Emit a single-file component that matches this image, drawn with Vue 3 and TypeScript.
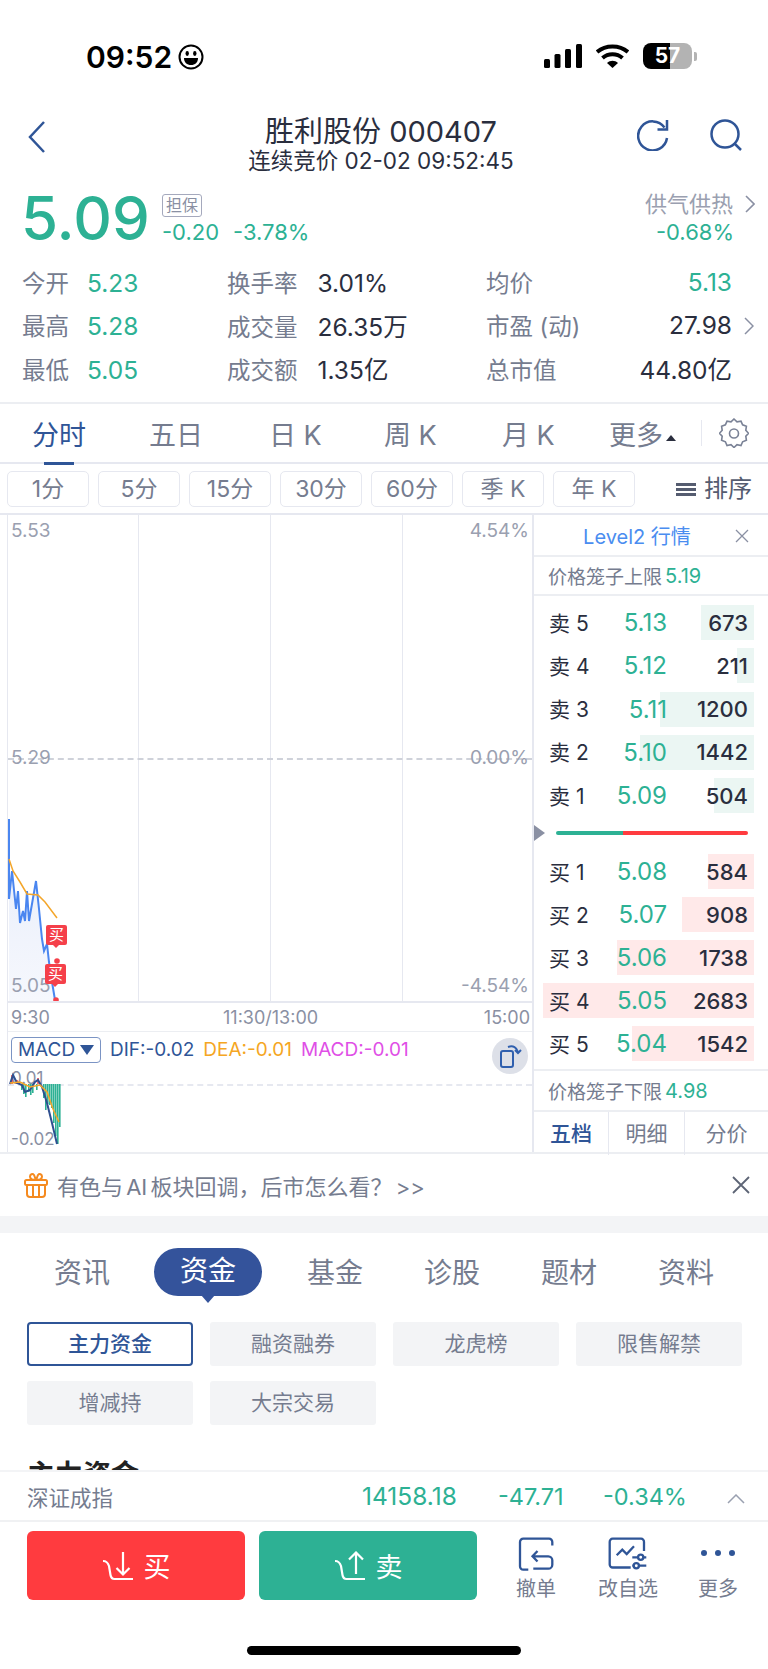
<script setup lang="ts">
const stats = [
  { a: "今开", b: "5.23", c: "换手率", d: "3.01%", e: "均价", f: "5.13", green: true, more: false },
  { a: "最高", b: "5.28", c: "成交量", d: "26.35万", e: "市盈 (动)", f: "27.98", green: false, more: true },
  { a: "最低", b: "5.05", c: "成交额", d: "1.35亿", e: "总市值", f: "44.80亿", green: false, more: false },
];
const tabs = ["分时", "五日", "日 K", "周 K", "月 K"];
const periods = ["1分", "5分", "15分", "30分", "60分", "季 K", "年 K"];
const asks = [
  { name: "卖 5", price: "5.13", vol: "673", w: 53 },
  { name: "卖 4", price: "5.12", vol: "211", w: 17 },
  { name: "卖 3", price: "5.11", vol: "1200", w: 94 },
  { name: "卖 2", price: "5.10", vol: "1442", w: 114 },
  { name: "卖 1", price: "5.09", vol: "504", w: 40 },
];
const bids = [
  { name: "买 1", price: "5.08", vol: "584", w: 46 },
  { name: "买 2", price: "5.07", vol: "908", w: 72 },
  { name: "买 3", price: "5.06", vol: "1738", w: 137 },
  { name: "买 4", price: "5.05", vol: "2683", w: 211 },
  { name: "买 5", price: "5.04", vol: "1542", w: 122 },
];
const newsTabs = ["资讯", "资金", "基金", "诊股", "题材", "资料"];
const chips = ["主力资金", "融资融券", "龙虎榜", "限售解禁", "增减持", "大宗交易"];

const priceLine = "1,306 1,386 4,358 8,396 10,378 12,410 15,398 17,408 19,378 21,408 28,368 31,396 34,426 36,438 39,431 41,449 44,469 47,487";
const avgLine = "1,346 5,358 12,369 19,381 30,382 37,389 49,405";
const macdBars = [
  { x: 13, h: 6 }, { x: 15, h: 10 }, { x: 17, h: 13 }, { x: 20, h: 8 }, { x: 22, h: 11 }, { x: 24, h: 9 }, { x: 28, h: 6 },
  { x: 35, h: 14 }, { x: 37, h: 26 }, { x: 39, h: 20 }, { x: 41, h: 21 }, { x: 43, h: 24 },
  { x: 45, h: 39 }, { x: 47, h: 52 }, { x: 49, h: 60 }, { x: 51, h: 43 },
];
const difLine = "2,30 5,21 9,29 14,31 17,38 22,36 27,28 30,26 34,33 39,49 44,69 49,90";
const deaLine = "2,29 12,28 22,33 32,31 39,38 45,55 51,68";
</script>

<template>
  <div class="page">
    <div class="status">
      <div class="clock">
        <span>09:52</span>
        <svg width="26" height="26" viewBox="0 0 26 26">
          <circle cx="13" cy="13" r="11.500" fill="none" stroke="#000" stroke-width="2" />
          <ellipse cx="9.200" cy="9.500" rx="1.700" ry="2.400" />
          <ellipse cx="16.800" cy="9.500" rx="1.700" ry="2.400" />
          <path d="M6 14h14c0 4.400-3 7-7 7s-7-2.600-7-7z" />
        </svg>
      </div>
      <div class="sys">
        <svg width="38" height="24" viewBox="0 0 38 24">
          <rect x="0" y="15" width="6" height="9" rx="1.500" />
          <rect x="10.500" y="10" width="6" height="14" rx="1.500" />
          <rect x="21" y="5" width="6" height="19" rx="1.500" />
          <rect x="32" y="0" width="6" height="24" rx="1.500" />
        </svg>
        <svg width="33" height="24" viewBox="0 0 33 24">
          <path d="M1 8C9.500 .5 23.500 .5 32 8" fill="none" stroke="#000" stroke-width="4" />
          <path d="M6.500 14c5.700-5 14.300-5 20 0" fill="none" stroke="#000" stroke-width="4" />
          <path d="M11 19c3.200-3 7.800-3 11 0l-5.500 5z" />
        </svg>
        <div class="battery">
          <div class="cell"><span>57</span></div>
          <i></i>
        </div>
      </div>
    </div>

    <div class="nav">
      <svg class="back" width="20" height="34" viewBox="0 0 20 34">
        <path d="M17 2 3 17l14 15" fill="none" stroke="#2f5597" stroke-width="2.500" />
      </svg>
      <div class="title">
        <div class="name">胜利股份 000407</div>
        <div class="sub">连续竞价 02-02 09:52:45</div>
      </div>
      <svg class="nav-ic" style="left: 637px" width="32" height="32" viewBox="0 0 32 32">
        <path d="M27.500 8.500A14.500 14.500 0 1 0 30 19" fill="none" stroke="#2f5597" stroke-width="2.500" />
        <path d="M30 1v9.500H20.500" fill="none" stroke="#2f5597" stroke-width="2.500" />
      </svg>
      <svg class="nav-ic" style="left: 710px" width="32" height="32" viewBox="0 0 32 32">
        <circle cx="15" cy="15" r="13.500" fill="none" stroke="#2f5597" stroke-width="2.500" />
        <path d="m24 24 7 7" fill="none" stroke="#2f5597" stroke-width="2.500" />
      </svg>
    </div>

    <div class="quote">
      <div class="price">5.09</div>
      <div class="change">
        <span class="tag">担保</span>
        <div class="green"><span>-0.20</span><span>-3.78%</span></div>
      </div>
      <div class="sector">
        <div class="sector-name">供气供热
          <svg width="10" height="18" viewBox="0 0 10 18"><path d="m1 1 8 8-8 8" fill="none" stroke="#8a90a3" stroke-width="1.600" /></svg>
        </div>
        <div class="green sector-pct">-0.68%</div>
      </div>
    </div>

    <div class="stats">
      <div v-for="row in stats" :key="row.a" class="stat-row">
        <div class="col1"><span class="lbl">{{ row.a }}</span><span class="green val">{{ row.b }}</span></div>
        <div class="col2"><span class="lbl">{{ row.c }}</span><span class="val">{{ row.d }}</span></div>
        <div class="col3">
          <span class="lbl">{{ row.e }}</span><span class="val" :class="{ green: row.green }">{{ row.f }}</span>
          <svg v-if="row.more" class="more" width="10" height="20" viewBox="0 0 10 20"><path d="m1 2 8 8-8 8" fill="none" stroke="#8a90a3" stroke-width="1.500" /></svg>
        </div>
      </div>
    </div>

    <div class="tabs">
      <div v-for="(t, i) in tabs" :key="t" class="tab" :class="{ on: i === 0 }">{{ t }}</div>
      <div class="tab more-tab">更多<i></i></div>
      <div class="gear">
        <svg width="30" height="30" viewBox="0 0 30 30" fill="none" stroke="#7a8296" stroke-width="1.600">
          <path d="M15 2l3 2.800 4-.7 1.600 3.700 3.800 1.500-.6 4 2.700 3-2.700 2.900.6 4-3.800 1.600L22 28.500l-4-.8-3 2.800-3-2.800-4 .8-1.600-3.700-3.800-1.600.6-4L.5 16.300l2.700-3-.6-4 3.800-1.500L8 4.100l4 .7z" transform="translate(0 -1)" />
          <circle cx="15" cy="15.500" r="4.500" />
        </svg>
      </div>
    </div>

    <div class="periods">
      <div v-for="p in periods" :key="p" class="period">{{ p }}</div>
      <div class="sort"><i></i>排序</div>
    </div>

    <div class="market">
      <div class="chart">
        <div class="plot">
          <i class="vline" style="left: 130px"></i>
          <i class="vline" style="left: 262px"></i>
          <i class="vline" style="left: 394px"></i>
          <i class="mid"></i>
          <svg class="lines" width="525" height="488" viewBox="0 0 525 488">
            <defs>
              <linearGradient id="area" x1="0" x2="0" y1="0" y2="1">
                <stop offset="0" stop-color="#e6ecfa" />
                <stop offset="1" stop-color="#f6f8fd" />
              </linearGradient>
            </defs>
            <polygon :points="`${priceLine} 47,488 1,488`" fill="url(#area)" />
            <polyline :points="priceLine" fill="none" stroke="#4a86f0" stroke-width="2" />
            <polyline :points="avgLine" fill="none" stroke="#f4a62a" stroke-width="1.500" />
            <circle cx="49" cy="448" r="2.800" fill="#f5404a" />
            <circle cx="48" cy="487" r="2.800" fill="#f5404a" />
          </svg>
          <span class="axis tl">5.53</span>
          <span class="axis tr">4.54%</span>
          <span class="axis ml">5.29</span>
          <span class="axis mr">0.00%</span>
          <span class="axis bl">5.05</span>
          <span class="axis br">-4.54%</span>
          <div class="mark" style="left: 38px; top: 410px">买</div>
          <div class="mark" style="left: 37px; top: 449px">买</div>
        </div>
        <div class="times"><span>9:30</span><span class="t-mid">11:30/13:00</span><span>15:00</span></div>
        <div class="legend">
          <span class="macd-btn">MACD<i></i></span>
          <span class="dif">DIF:-0.02</span>
          <span class="dea">DEA:-0.01</span>
          <span class="mac">MACD:-0.01</span>
          <div class="rotate">
            <svg width="26" height="26" viewBox="0 0 26 26" fill="none" stroke="#2f5fae" stroke-width="2">
              <rect x="4" y="8" width="12" height="16" rx="2" />
              <path d="M11 4c5-2 9 .5 10 5" />
              <path d="m18 7 3 3 3-3" />
            </svg>
          </div>
        </div>
        <div class="macd">
          <i class="zero"></i>
          <span class="m-top">0.01</span>
          <span class="m-bot">-0.02</span>
          <svg class="lines" width="525" height="96" viewBox="0 0 525 96">
            <rect v-for="b in macdBars" :key="b.x" :x="b.x" y="30" width="1.600" :height="b.h" fill="#2db194" />
            <path d="M4 30v-9M9 30v-4M30 30v-6" stroke="#f5404a" stroke-width="1.500" />
            <polyline :points="difLine" fill="none" stroke="#2f4f8f" stroke-width="2" />
            <polyline :points="deaLine" fill="none" stroke="#f4a62a" stroke-width="1.500" />
          </svg>
        </div>
      </div>

      <div class="book">
        <div class="book-head"><span>Level2 行情</span>
          <svg width="14" height="14" viewBox="0 0 14 14"><path d="m1 1 12 12M13 1 1 13" stroke="#8a90a3" stroke-width="1.300" /></svg>
        </div>
        <div class="cage">价格笼子上限<b>5.19</b></div>
        <div class="levels">
          <div v-for="r in asks" :key="r.name" class="level">
            <i class="bar ask" :style="{ width: r.w + 'px' }"></i>
            <span class="l-name">{{ r.name }}</span><span class="l-price">{{ r.price }}</span><span class="l-vol">{{ r.vol }}</span>
          </div>
        </div>
        <div class="slider">
          <i class="arrow"></i>
          <div class="track"><i class="t-green"></i><i class="t-red"></i></div>
        </div>
        <div class="levels bids">
          <div v-for="r in bids" :key="r.name" class="level">
            <i class="bar bid" :style="{ width: r.w + 'px' }"></i>
            <span class="l-name">{{ r.name }}</span><span class="l-price">{{ r.price }}</span><span class="l-vol">{{ r.vol }}</span>
          </div>
        </div>
        <div class="cage low">价格笼子下限<b>4.98</b></div>
        <div class="book-tabs"><span class="on">五档</span><span>明细</span><span>分价</span></div>
      </div>
    </div>

    <div class="notice">
      <svg width="26" height="26" viewBox="0 0 26 26" fill="none" stroke="#f58a1f" stroke-width="2">
        <rect x="2" y="8" width="22" height="5" rx="1.500" />
        <path d="M4 13v9a3 3 0 0 0 3 3h12a3 3 0 0 0 3-3v-9M10 13v12M16 13v12" />
        <path d="M13 8C9 8 7 6.500 7 4.500S9.500 1 11 3zM13 8c4 0 6-1.500 6-3.500S16.500 1 15 3z" />
      </svg>
      <span class="notice-text">有色与 AI 板块回调，后市怎么看？ &gt;&gt;</span>
      <svg class="notice-x" width="18" height="18" viewBox="0 0 18 18"><path d="m1 1 16 16M17 1 1 17" stroke="#5d6475" stroke-width="1.800" /></svg>
    </div>
    <div class="gap"></div>

    <div class="news">
      <div v-for="(n, i) in newsTabs" :key="n" class="news-tab" :class="{ on: i === 1 }">{{ n }}</div>
    </div>
    <div class="chips">
      <div v-for="(c, i) in chips" :key="c" class="chip" :class="{ on: i === 0 }">{{ c }}</div>
    </div>
    <div class="section"><div class="section-title">主力资金</div></div>

    <div class="index">
      <span class="idx-name">深证成指</span>
      <span class="idx-a green">14158.18</span>
      <span class="idx-b green">-47.71</span>
      <span class="idx-c green">-0.34%</span>
      <svg width="18" height="10" viewBox="0 0 18 10"><path d="m1 9 8-8 8 8" fill="none" stroke="#9aa0b0" stroke-width="1.500" /></svg>
    </div>

    <div class="actions">
      <div class="trade buy">
        <svg width="32" height="30" viewBox="0 0 32 30" fill="none" stroke="#fff" stroke-width="2.200">
          <path d="M1 10c4 0 5 2 6 5l1.500 9c.5 3 2 4 4 4H31" />
          <path d="M21 1v22M14.500 17l6.500 6.500 6.500-6.500" />
        </svg>
        <span>买</span>
      </div>
      <div class="trade sell">
        <svg width="32" height="30" viewBox="0 0 32 30" fill="none" stroke="#fff" stroke-width="2.200">
          <path d="M1 10c4 0 5 2 6 5l1.500 9c.5 3 2 4 4 4H31" />
          <path d="M22 23V1.500M15 8.500l7-7 7 7" />
        </svg>
        <span>卖</span>
      </div>
      <div class="act">
        <svg width="36" height="34" viewBox="0 0 36 34" fill="none" stroke="#2f5597" stroke-width="2.300">
          <path d="M34.300 8.500V5A3.300 3.300 0 0 0 31 1.700H5.300A3.300 3.300 0 0 0 2 5v24.300a3.300 3.300 0 0 0 3.300 3.400h5" />
          <path d="m19.500 14-5 5.300 5 5.200M14.500 19.300h15.800a4 4 0 0 1 4 4v4.400a4 4 0 0 1-4 4h-15" />
        </svg>
        <span>撤单</span>
      </div>
      <div class="act">
        <svg width="40" height="34" viewBox="0 0 40 34" fill="none" stroke="#2f5597" stroke-width="2.300">
          <path d="M36 14V5a3 3 0 0 0-3-3.300H4.700a3 3 0 0 0-3 3.300v22.500a3 3 0 0 0 3 3h18" />
          <path d="m8.700 18.300 5.600-5.600 4.400 4.300 7.300-7.700" />
          <path d="M24.300 20.300h14M24.300 28.700h14" />
          <circle cx="32.700" cy="20.300" r="2.600" fill="#fff" />
          <circle cx="28.300" cy="28.700" r="2.600" fill="#fff" />
        </svg>
        <span>改自选</span>
      </div>
      <div class="act">
        <svg width="36" height="34" viewBox="0 0 36 34" fill="#2f5597">
          <circle cx="4" cy="16" r="3" /><circle cx="18" cy="16" r="3" /><circle cx="32" cy="16" r="3" />
        </svg>
        <span>更多</span>
      </div>
    </div>
    <div class="home"><i></i></div>
  </div>
</template>

<style>
html, body { background: #fff; }
</style>

<style scoped>
.page {
  width: 768px;
  height: 1669px;
  overflow: hidden;
  background: #fff;
  display: flex;
  flex-direction: column;
  font-family: Inter, "Noto Sans CJK SC", sans-serif;
  color: #2a2e3e;
}
i { display: block; }
.green { color: #2db194; }

.status {
  height: 104px;
  flex: none;
  display: flex;
  justify-content: space-between;
  padding: 43px 71px 0 86px;
  box-sizing: border-box;
}
.clock { display: flex; align-items: center; gap: 6px; height: 28px; font-size: 30px; font-weight: 600; color: #000; }
.sys { display: flex; align-items: center; gap: 14px; height: 26px; }
.battery { display: flex; align-items: center; gap: 2px; }
.cell {
  width: 49px;
  height: 26px;
  border-radius: 8px;
  background: linear-gradient(90deg, #000 55%, #b3b3b3 55%);
  color: #fff;
  font-size: 21px;
  font-weight: 700;
  text-align: center;
  line-height: 26px;
}
.battery i { width: 3px; height: 9px; background: #b3b3b3; border-radius: 0 2px 2px 0; }

.nav { height: 71px; flex: none; position: relative; text-align: center; }
.back { position: absolute; left: 27px; top: 16px; }
.nav-ic { position: absolute; top: 15px; }
.title { margin-left: -6px; }
.name { font-size: 29px; line-height: 34px; margin-top: 11px; }
.sub { font-size: 22.500px; line-height: 26px; margin-top: -1px; }

.quote { height: 85px; flex: none; position: relative; display: flex; padding: 0 13px 0 21px; box-sizing: border-box; }
.price { font-size: 60px; line-height: 70px; color: #2db194; margin-top: 8px; width: 141px; font-weight: 500; }
.change { margin-top: 19px; font-size: 22px; line-height: 28px; }
.change .green { display: flex; gap: 14px; }
.tag {
  display: block;
  width: 38px;
  height: 21px;
  line-height: 20px;
  font-size: 16px;
  border: 1px solid #a5a9bd;
  border-radius: 3px;
  text-align: center;
  color: #8a90a3;
  margin-bottom: 1px;
}
.sector { margin-left: auto; font-size: 22px; line-height: 28px; margin-top: 15px; }
.sector-name { color: #9aa0b0; display: flex; align-items: center; gap: 12px; }
.sector-pct { text-align: right; padding-right: 21px; }

.stats { height: 144px; flex: none; box-sizing: border-box; border-bottom: 2px solid #eceef2; }
.stat-row { display: grid; grid-template-columns: 205px 259px 246px; padding-left: 22px; height: 43.500px; align-items: center; font-size: 23.500px; }
.lbl { color: #757c8f; }
.val { font-size: 24.500px; }
.col1 .val { margin-left: 18px; }
.col2 .val { margin-left: 20px; }
.col3 { display: flex; justify-content: space-between; align-items: center; position: relative; }
.more { position: absolute; right: -22px; top: 8px; }

.tabs { height: 60px; flex: none; display: flex; align-items: center; font-size: 27px; color: #757c8f; box-sizing: border-box; border-bottom: 2px solid #e6e8f0; position: relative; }
.tab { position: absolute; top: 13px; line-height: 38px; }
.tab:nth-child(1) { left: 32px; color: #2f5597; }
.tab:nth-child(1)::after { content: ""; position: absolute; left: 12px; top: 45px; width: 30px; height: 3px; background: #2f5597; }
.tab:nth-child(2) { left: 149px; }
.tab:nth-child(3) { left: 269px; }
.tab:nth-child(4) { left: 384px; }
.tab:nth-child(5) { left: 502px; }
.more-tab { left: 609px; }
.more-tab i { display: inline-block; margin-left: 3px; vertical-align: 4px; border: 5px solid transparent; border-top: 0; border-bottom: 6px solid #2a2e3e; }
.gear { position: absolute; left: 719px; top: 14px; padding-left: 0; }
.gear::before { content: ""; position: absolute; left: -18px; top: 2px; height: 26px; border-left: 1px solid #e6e8f0; }

.periods { height: 51px; flex: none; display: flex; gap: 9px; padding: 7px 0 0 7px; box-sizing: border-box; border-bottom: 2px solid #e6e8f0; position: relative; }
.period { width: 82px; height: 36px; box-sizing: border-box; border: 1px solid #e6e8f0; border-radius: 5px; text-align: center; line-height: 34px; font-size: 23px; color: #757c8f; }
.sort { position: absolute; left: 676px; top: 7px; font-size: 24px; line-height: 36px; color: #555c70; display: flex; align-items: center; gap: 8px; }
.sort i { width: 20px; height: 13px; border-top: 3px solid #555c70; border-bottom: 3px solid #555c70; position: relative; box-sizing: border-box; }
.sort i::after { content: ""; position: absolute; left: 0; right: 0; top: 2px; height: 3px; background: #555c70; }

.market { height: 637px; flex: none; display: flex; border-bottom: 2px solid #eceef2; box-sizing: content-box; }
.chart { width: 527px; margin-left: 7px; flex: none; border-left: 1px solid #e6e8f0; border-right: 2px solid #e6e8f0; box-sizing: border-box; display: flex; flex-direction: column; }
.plot { height: 488px; flex: none; position: relative; border-bottom: 2px solid #e6e8f0; box-sizing: border-box; }
.vline { position: absolute; top: 0; bottom: 0; width: 1px; background: #e6e8f0; }
.mid { position: absolute; left: 0; right: 0; top: 243px; border-top: 2px dashed #cfd2da; }
.lines { position: absolute; left: 0; top: -2px; }
.axis { position: absolute; font-size: 19px; line-height: 22px; color: #9aa0b0; background: transparent; }
.tl { left: 3px; top: 5px; }
.tr { right: 3px; top: 5px; }
.ml { left: 3px; top: 232px; }
.mr { right: 3px; top: 232px; }
.bl { left: 3px; top: 460px; }
.br { right: 3px; top: 460px; }
.mark {
  position: absolute;
  width: 21px;
  height: 20px;
  background: #f5404a;
  color: #fff;
  font-size: 15px;
  line-height: 20px;
  text-align: center;
  border-radius: 2px;
}
.mark::after { content: ""; position: absolute; left: 7px; top: 20px; border: 3px solid transparent; border-top-color: #f5404a; border-bottom: 0; }
.times { height: 29px; flex: none; display: flex; justify-content: space-between; padding: 0 2px 0 3px; align-items: center; font-size: 18px; color: #8a90a3; position: relative; border-bottom: 1px solid #eceef2; box-sizing: border-box; }
.t-mid { position: absolute; left: 215px; }
.legend { height: 35px; flex: none; position: relative; display: flex; align-items: center; font-size: 19px; gap: 9px; padding-left: 3px; white-space: nowrap; }
.macd-btn { width: 90px; height: 26px; flex: none; border: 1px solid #7b94c4; border-radius: 4px; box-sizing: border-box; display: flex; align-items: center; justify-content: center; gap: 5px; color: #2f5597; }
.macd-btn i { border: 7px solid transparent; border-top: 10px solid #2f5597; border-bottom: 0; }
.dif { color: #2f5597; }
.dea { color: #f5a623; }
.mac { color: #e04fe6; }
.rotate { position: absolute; left: 484px; top: 6px; width: 36px; height: 36px; border-radius: 50%; background: #dde0e8; display: flex; align-items: center; justify-content: center; }
.macd { flex: 1; position: relative; }
.zero { position: absolute; left: 0; right: 0; top: 17px; border-top: 2px dashed #e6e8f0; }
.macd .lines { top: -13px; }
.m-top, .m-bot { position: absolute; left: 3px; font-size: 17px; color: #8a90a3; }
.m-top { top: 1px; }
.m-bot { top: 62px; }

.book { flex: 1; display: flex; flex-direction: column; min-width: 0; }
.book-head { height: 42px; flex: none; display: flex; align-items: center; justify-content: center; position: relative; font-size: 20px; color: #4a8df0; border-bottom: 2px solid #eceef2; box-sizing: border-box; padding-right: 28px; }
.book-head svg { position: absolute; right: 19px; top: 14px; }
.cage { height: 39px; flex: none; display: flex; align-items: center; padding-left: 14px; font-size: 19px; color: #757c8f; border-bottom: 2px solid #eceef2; box-sizing: border-box; }
.cage b { font-weight: 400; font-size: 20px; color: #2db194; margin-left: 3px; }
.cage.low { border-top: 0; height: 41px; }
.levels { padding-top: 9px; display: flex; flex-direction: column; gap: 8.250px; }
.level { height: 35px; flex: none; position: relative; font-size: 22px; display: flex; align-items: center; margin-right: 14px; }
.bar { position: absolute; right: 0; top: 0; bottom: 0; }
.ask { background: #ebf6f3; }
.bid { background: #ffe9e9; }
.l-name, .l-price, .l-vol { position: relative; }
.l-name { margin-left: 15px; margin-top: -2px; width: 64px; font-size: 21px; }
.l-price { width: 54px; text-align: right; color: #2db194; font-size: 24px; }
.l-vol { margin-left: auto; margin-right: 6px; font-weight: 500; }
.slider { height: 35px; flex: none; position: relative; }
.arrow { position: absolute; left: 0; top: 12px; border: 8px solid transparent; border-left: 11px solid #8a90a3; border-right: 0; }
.track { position: absolute; left: 22px; top: 18px; width: 192px; height: 4px; display: flex; border-radius: 2px; overflow: hidden; }
.t-green { width: 67px; background: #2db194; }
.t-red { flex: 1; background: #ff3b3f; }
.bids { padding-top: 6px; padding-bottom: 8px; gap: 8px; border-bottom: 2px solid #eceef2; }
.book-tabs { flex: 1; display: flex; font-size: 21px; color: #757c8f; }
.book-tabs span { flex: none; width: 75px; text-align: center; line-height: 43px; border-right: 1px solid #e6e8f0; box-sizing: border-box; }
.book-tabs span:nth-child(2) { width: 76px; }
.book-tabs span:last-child { border-right: 0; width: 83px; }
.book-tabs .on { color: #2f5597; font-weight: 500; }

.notice { height: 62px; flex: none; display: flex; align-items: center; padding: 0 18px 0 23px; position: relative; gap: 8px; font-size: 22px; word-spacing: -3px; color: #757c8f; }
.notice-x { margin-left: auto; }
.gap { height: 17px; flex: none; background: #f3f4f6; }

.news { height: 89px; flex: none; position: relative; }
.news-tab { position: absolute; top: 21px; font-size: 28px; line-height: 38px; color: #757c8f; }
.news-tab:nth-child(1) { left: 54px; }
.news-tab:nth-child(2) { left: 154px; width: 108px; height: 48px; top: 15px; line-height: 47px; text-align: center; background: #34539b; color: #fff; border-radius: 24px; }
.news-tab:nth-child(2)::after { content: ""; position: absolute; left: 47px; top: 47px; border: 7px solid transparent; border-top: 8px solid #34539b; border-bottom: 0; }
.news-tab:nth-child(3) { left: 307px; }
.news-tab:nth-child(4) { left: 424px; }
.news-tab:nth-child(5) { left: 541px; }
.news-tab:nth-child(6) { left: 658px; }

.chips { flex: none; display: grid; grid-template-columns: repeat(4, 166px); column-gap: 17px; row-gap: 15px; padding-left: 27px; }
.chip { height: 44px; line-height: 44px; background: #f3f4f6; border-radius: 3px; text-align: center; font-size: 21px; color: #757c8f; }
.chip.on { background: #fff; border: 2px solid #2f5597; box-sizing: border-box; line-height: 40px; color: #2f5597; font-weight: 500; border-radius: 4px; }

.section { flex: 1; min-height: 0; overflow: hidden; padding: 33px 0 0 27px; }
.section-title { font-size: 28px; line-height: 34px; font-weight: 600; color: #222; }

.index { height: 52px; flex: none; position: relative; border-top: 2px solid #f3f4f6; border-bottom: 2px solid #f0f1f3; box-sizing: border-box; font-size: 23.500px; display: flex; align-items: center; background: #fff; }
.index > * { position: absolute; }
.idx-name { left: 27px; color: #757c8f; font-size: 21.500px; }
.idx-a { left: 362px; font-size: 24.500px; }
.idx-b { left: 498px; }
.idx-c { left: 603px; }
.index svg { left: 727px; top: 22px; }

.actions { height: 102px; flex: none; display: flex; padding: 9px 0 0 27px; box-sizing: border-box; position: relative; }
.trade { width: 218px; height: 69px; border-radius: 6px; display: flex; align-items: center; justify-content: center; gap: 10px; color: #fff; font-size: 27px; margin-right: 14px; }
.buy { background: #ff3b3f; }
.sell { background: #2db194; }
.act { position: absolute; top: 15px; display: flex; flex-direction: column; align-items: center; font-size: 20px; line-height: 30px; color: #757c8f; gap: 3px; transform: translateX(-50%); }
.act:nth-child(3) { left: 536px; }
.act:nth-child(4) { left: 628px; }
.act:nth-child(5) { left: 718px; }
.home { height: 45px; flex: none; position: relative; }
.home i { position: absolute; left: 247px; top: 22px; width: 274px; height: 9px; border-radius: 5px; background: #000; }
</style>
